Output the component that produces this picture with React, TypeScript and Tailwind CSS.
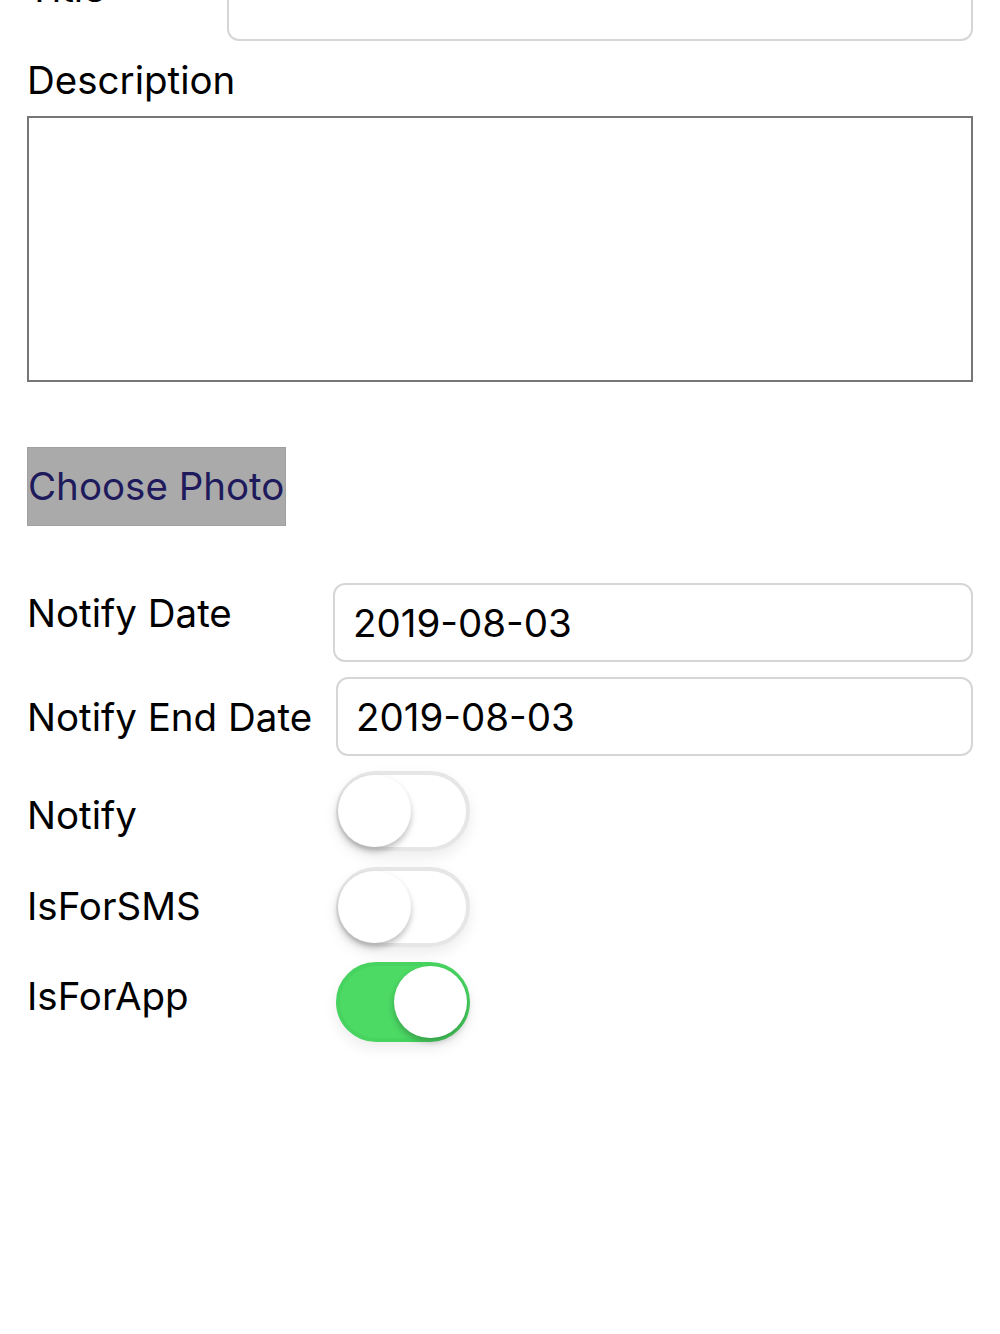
import React, { useState } from 'react'

function Toggle({ on, onChange }: { on: boolean; onChange: () => void }) {
  return (
    <button
      onClick={onChange}
      className={`relative shrink-0 w-[134px] h-[80px] rounded-full border-4 shadow-[0_6px_14px_rgba(0,0,0,0.08)] ${
        on ? 'bg-[#4cd964] border-[#47d35f]' : 'bg-white border-[#e6e6e6]'
      }`}
    >
      <span
        className={`absolute top-[0px] w-[73px] h-[72px] rounded-full bg-white shadow-[0_4px_6px_rgba(0,0,0,0.25)] ${
          on ? 'left-[54px]' : 'left-[-2px]'
        }`}
      ></span>
    </button>
  )
}

export default function App() {
  const [notify, setNotify] = useState(false)
  const [sms, setSms] = useState(false)
  const [app, setApp] = useState(true)

  return (
    <main
      className="min-h-[1334px] bg-white text-black overflow-hidden"
      style={{ fontFamily: 'Inter, "Liberation Sans", sans-serif' }}
    >
      <div className="-mt-[41px] pl-[27px] pr-[27px] text-[38.5px]">
        {/* Title */}
        <div className="flex items-start">
          <label className="shrink-0 w-[200px] pt-[7px] leading-[44px]">Title</label>
          <input className="flex-1 min-w-0 h-[82px] border-2 border-[#d6d6d6] rounded-[12px] px-5 outline-none" />
        </div>

        {/* Description */}
        <div className="mt-[14px] leading-[50px]">Description</div>
        <textarea className="block mt-[11px] w-full h-[266px] border-2 border-[#777] resize-none outline-none"></textarea>

        {/* Photo */}
        <div className="mt-[65px]">
          <button className="h-[79px] w-[259px] bg-[#aaaaaa] border border-[#a0a0a0] text-[#1e1a5c] text-left pl-0 whitespace-nowrap">
            Choose Photo
          </button>
        </div>

        {/* Dates */}
        <div className="mt-[57px] flex items-start">
          <label className="shrink-0 w-[306px] pt-[8px] leading-[44px]">Notify Date</label>
          <input
            defaultValue="2019-08-03"
            className="flex-1 min-w-0 h-[79px] border-2 border-[#d6d6d6] rounded-[12px] px-[18px] outline-none"
          />
        </div>
        <div className="mt-[15px] flex items-center">
          <label className="shrink-0 w-[309px] leading-[44px] whitespace-nowrap">Notify End Date</label>
          <input
            defaultValue="2019-08-03"
            className="flex-1 min-w-0 h-[79px] border-2 border-[#d6d6d6] rounded-[12px] px-[18px] outline-none"
          />
        </div>

        {/* Toggles */}
        <div className="mt-[15px] flex items-center">
          <label className="shrink-0 w-[309px] pt-[10px]">Notify</label>
          <Toggle on={notify} onChange={() => setNotify(!notify)} />
        </div>
        <div className="mt-[16px] flex items-center">
          <label className="shrink-0 w-[309px]">IsForSMS</label>
          <Toggle on={sms} onChange={() => setSms(!sms)} />
        </div>
        <div className="mt-[15px] flex items-center">
          <label className="shrink-0 w-[309px] pb-[10px]">IsForApp</label>
          <Toggle on={app} onChange={() => setApp(!app)} />
        </div>
      </div>
    </main>
  )
}
